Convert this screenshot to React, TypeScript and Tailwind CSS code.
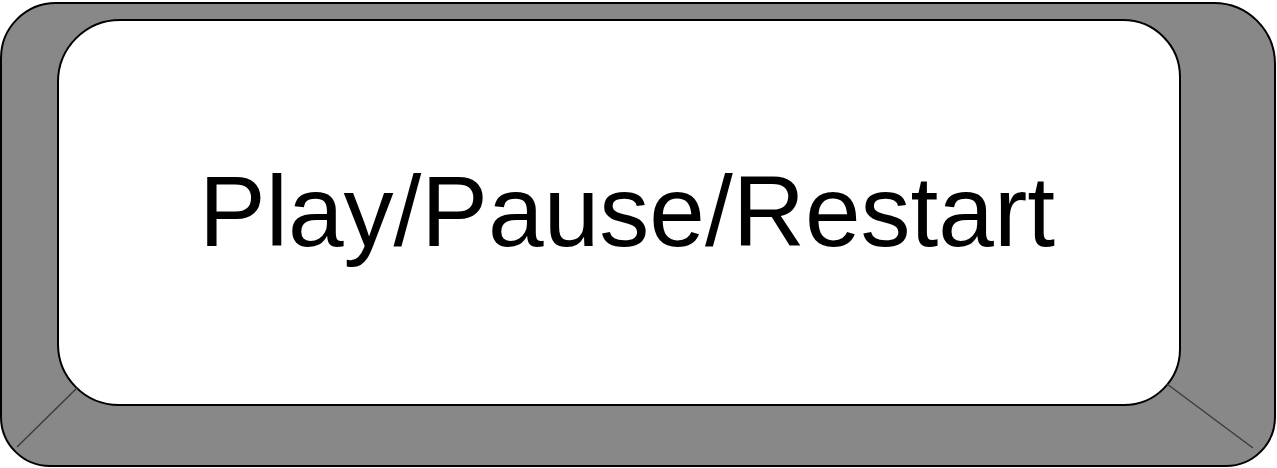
export default function App() {
  return (
    <div className="relative w-[1277px] h-[468px] bg-white pt-[2px] overflow-hidden">
      <div className="w-[1276px] h-[465px] bg-[#888888] border-2 border-black rounded-tl-[56px] rounded-tr-[62px] rounded-br-[50px] rounded-bl-[50px] pt-[15px] pl-[55px]">
        <div className="w-[1124px] h-[387px] bg-white border-2 border-black rounded-tl-[63px] rounded-tr-[58px] rounded-br-[57px] rounded-bl-[62px] flex items-center justify-center pl-[16px] pb-[4px]">
          <span
            className="text-[100px] leading-[100px] text-black whitespace-nowrap"
            style={{ fontFamily: '"Liberation Sans", Arial, sans-serif' }}
          >
            Play/Pause/Restart
          </span>
        </div>
      </div>
      <svg className="absolute inset-0 pointer-events-none" width="1277" height="468" viewBox="0 0 1277 468">
        <line x1="77" y1="388" x2="17" y2="447" stroke="#3c3c3c" strokeWidth="1.5" />
        <line x1="1167" y1="384" x2="1253" y2="448" stroke="#3c3c3c" strokeWidth="1.5" />
      </svg>
    </div>
  );
}
